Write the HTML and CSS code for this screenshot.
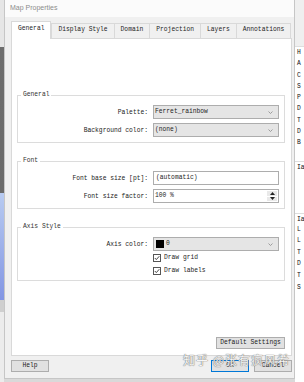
FILE: index.html
```html
<!DOCTYPE html>
<html>
<head>
<meta charset="utf-8">
<link rel="stylesheet" href="styles.css">
</head>
<body>
<div class="screen">
  <div class="strip-left"></div>
  <div class="dialog">
    <div class="titlebar">Map Properties</div>
    <div class="dlg-body">
      <div class="tabs">
        <div class="tab active">General</div>
        <div class="tab">Display Style</div>
        <div class="tab">Domain</div>
        <div class="tab">Projection</div>
        <div class="tab">Layers</div>
        <div class="tab">Annotations</div>
      </div>
      <div class="panel">
        <fieldset class="group">
          <legend>General</legend>
          <div class="row">
            <span class="lbl">Palette:</span>
            <div class="combo"><span>Ferret_rainbow</span><svg class="chev" width="5" height="3" viewBox="0 0 5 3"><path d="M0.5 0.5 L2.5 2.5 L4.5 0.5" fill="none" stroke="#8a8a8a" stroke-width="0.8"/></svg></div>
          </div>
          <div class="row">
            <span class="lbl">Background color:</span>
            <div class="combo"><span>(none)</span><svg class="chev" width="5" height="3" viewBox="0 0 5 3"><path d="M0.5 0.5 L2.5 2.5 L4.5 0.5" fill="none" stroke="#8a8a8a" stroke-width="0.8"/></svg></div>
          </div>
        </fieldset>
        <fieldset class="group gap-top">
          <legend>Font</legend>
          <div class="row">
            <span class="lbl">Font base size [pt]:</span>
            <div class="input">(automatic)</div>
          </div>
          <div class="row">
            <span class="lbl">Font size factor:</span>
            <div class="spin">
              <span class="spin-text">100 %</span>
              <div class="spin-btns">
                <div class="spin-btn"><svg width="5" height="3" viewBox="0 0 5 3"><path d="M0 3 L2.5 0 L5 3 Z" fill="#222"/></svg></div>
                <div class="spin-btn"><svg width="5" height="3" viewBox="0 0 5 3"><path d="M0 0 L2.5 3 L5 0 Z" fill="#222"/></svg></div>
              </div>
            </div>
          </div>
        </fieldset>
        <fieldset class="group gap-top">
          <legend>Axis Style</legend>
          <div class="row">
            <span class="lbl">Axis color:</span>
            <div class="combo"><span class="swatch"></span><span>0</span><svg class="chev" width="5" height="3" viewBox="0 0 5 3"><path d="M0.5 0.5 L2.5 2.5 L4.5 0.5" fill="none" stroke="#8a8a8a" stroke-width="0.8"/></svg></div>
          </div>
          <div class="row check-row first-check">
            <div class="check"><svg width="8" height="8" viewBox="0 0 8 8"><rect x="0.5" y="0.5" width="7" height="7" fill="#fff" stroke="#555"/><path d="M1.8 4 L3.3 5.6 L6.3 2.2" fill="none" stroke="#333" stroke-width="0.9"/></svg><span>Draw grid</span></div>
          </div>
          <div class="row check-row">
            <div class="check"><svg width="8" height="8" viewBox="0 0 8 8"><rect x="0.5" y="0.5" width="7" height="7" fill="#fff" stroke="#555"/><path d="M1.8 4 L3.3 5.6 L6.3 2.2" fill="none" stroke="#333" stroke-width="0.9"/></svg><span>Draw labels</span></div>
          </div>
        </fieldset>
        <button class="btn btn-default">Default Settings</button>
      </div>
      <div class="buttons">
        <button class="btn btn-small">Help</button>
        <span class="spacer"></span>
        <button class="btn btn-small btn-ok">OK</button>
        <button class="btn btn-small">Cancel</button>
      </div>
    </div>
  </div>
  <div class="strip-right">
    <div class="sr-head"></div>
    <div class="sr-list">
      <div>H</div><div>A</div><div>C</div><div>S</div><div>P</div><div>D</div><div>T</div><div>D</div><div>B</div>
    </div>
    <div class="sr-sec sr-sec1">Ia</div>
    <div class="sr-sec sr-sec2">Ia</div>
    <div class="sr-list sr-list2">
      <div>L</div><div>L</div><div>T</div><div>D</div><div>T</div><div>S</div>
    </div>
  </div>
</div>
<div class="watermark">知乎 @张有疯风希</div>
</body>
</html>
```

FILE: styles.css
```css
* { box-sizing: border-box; }

body {
  margin: 0;
  width: 304px;
  height: 382px;
  overflow: hidden;
  background: #d9d9d9;
  font-family: "Liberation Mono", "DejaVu Sans Mono", monospace;
  font-size: 6.3px;
  color: #1e1e1e;
  position: relative;
}

.screen {
  display: flex;
  height: 382px;
}

.strip-left {
  width: 4px;
  flex: none;
  background: linear-gradient(to bottom,
    #e6e6e6 0, #e6e6e6 47px,
    #6d6d6d 47px, #6a6a6a 193px,
    #b8cbf1 193px, #8396e3 300px,
    #cfcfcf 300px, #cfcfcf 312px,
    #ececec 312px);
}

.dialog {
  width: 291px;
  flex: none;
  height: 379px;
  background: #f0f0f0;
  border: 1px solid #c6c6c6;
  border-top: none;
  display: flex;
  flex-direction: column;
}

.titlebar {
  height: 17px;
  flex: none;
  background: #fbfbfb;
  font-family: "Liberation Sans", Arial, sans-serif;
  font-size: 7px;
  color: #8c8c8c;
  padding-left: 5px;
  line-height: 16px;
}

.dlg-body {
  display: flex;
  flex-direction: column;
  padding: 4px 2px 0 6px;
}

.tabs {
  display: flex;
  align-items: flex-end;
  height: 17px;
  position: relative;
  z-index: 1;
}

.tab {
  height: 15px;
  padding: 0 6px;
  border: 1px solid #d9d9d9;
  border-bottom: none;
  margin-left: -1px;
  line-height: 12px;
  background: #f0f0f0;
  white-space: nowrap;
}

.tab.active {
  height: 18px;
  margin-left: 0;
  margin-right: 1px;
  margin-bottom: -1px;
  background: #fff;
  line-height: 13px;
}

.panel {
  height: 318px;
  background: #fff;
  border: 1px solid #d9d9d9;
  padding: 52px 6px 6px 5px;
  display: flex;
  flex-direction: column;
}

.group {
  margin: 0;
  min-width: 0;
  padding: 6px 5px 5px 5px;
  border: 1px solid #dcdcdc;
}

.group.gap-top { margin-top: 14px; }

.group legend {
  padding: 0 2px;
  margin-left: -2px;
  line-height: 8px;
  color: #333;
}

.row {
  display: flex;
  justify-content: flex-end;
  align-items: center;
  gap: 5px;
  height: 14px;
}

.row + .row { margin-top: 4px; }

.lbl {
  white-space: nowrap;
  color: #222;
}

.combo {
  width: 126px;
  height: 14px;
  background: #e5e5e5;
  border: 1px solid #adadad;
  display: flex;
  align-items: center;
  padding: 0 5px 0 1px;
  line-height: 12px;
}

.combo .chev { margin-left: auto; }

.swatch {
  width: 8px;
  height: 8px;
  background: #000;
  margin: 0 2px 0 1px;
}

.input {
  width: 126px;
  height: 14px;
  background: #fff;
  border: 1px solid #adadad;
  padding-left: 2px;
  line-height: 12px;
}

.spin {
  width: 126px;
  height: 14px;
  background: #fff;
  border: 1px solid #adadad;
  display: flex;
}

.spin-text {
  flex: 1;
  padding-left: 1px;
  line-height: 12px;
}

.spin-btns {
  width: 10px;
  margin: 1px 1px 1px 0;
  display: flex;
  flex-direction: column;
  gap: 1px;
}

.spin-btn {
  flex: 1;
  background: #e9e9e9;
  display: flex;
  align-items: center;
  justify-content: center;
}

.check-row { height: 9px; }
.row.first-check { margin-top: 2px; }

.check {
  width: 126px;
  display: flex;
  align-items: center;
  gap: 3px;
  line-height: 9px;
}

.check svg { flex: none; }

.btn {
  font-family: inherit;
  font-size: 6.3px;
  color: #222;
  height: 12px;
  padding: 0;
  margin: 0;
  border: 1px solid #adadad;
  background: #e1e1e1;
  line-height: 10px;
}

.btn-default {
  margin-top: auto;
  align-self: flex-end;
  width: 69px;
}

.buttons {
  display: flex;
  margin-top: 4px;
  height: 12px;
}

.btn-small { width: 38px; }

.btn-ok {
  border-color: #0078d7;
  margin-right: 5px;
}

.spacer { flex: 1; }

.strip-right {
  flex: 1;
  background: #fff;
  padding-left: 2px;
  overflow: hidden;
  color: #111;
}

.sr-head {
  height: 47px;
  margin-left: -2px;
  background: #efefef;
  border-bottom: 1px solid #dedede;
}

.sr-list div {
  height: 11.3px;
  line-height: 11.3px;
}

.sr-sec {
  line-height: 11px;
  height: 11px;
  margin-left: -2px;
  padding-left: 2px;
  border-top: 1px solid #dedede;
}

.sr-sec1 { margin-top: 12px; }
.sr-sec2 { margin-top: 41px; }

.sr-list2 div {
  height: 11.6px;
  line-height: 11.6px;
}

.watermark {
  position: absolute;
  left: 183px;
  top: 352px;
  font-family: "Noto Sans CJK SC", sans-serif;
  font-size: 12px;
  letter-spacing: 1px;
  color: #f6f6f6;
  text-shadow: 0 0 1px #6e6e6e, 0 0 1px #6e6e6e;
  white-space: nowrap;
  line-height: 16px;
}
```
